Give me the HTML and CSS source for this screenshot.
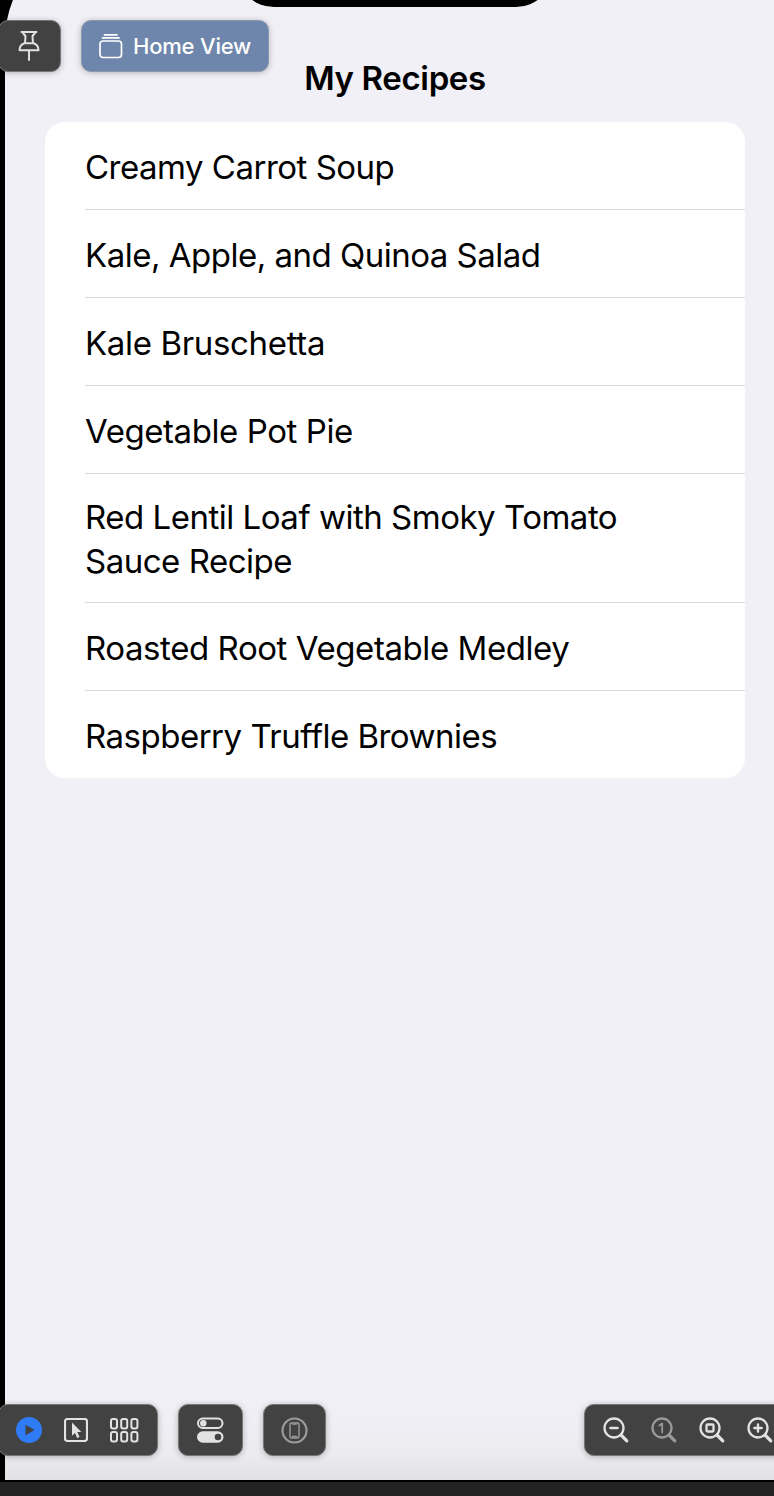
FILE: index.html
```html
<!DOCTYPE html>
<html lang="en">
<head>
<meta charset="utf-8">
<title>My Recipes</title>
<link rel="stylesheet" href="styles.css">
</head>
<body>
<div class="canvas">
  <div class="device">
    <div class="backdrop"></div>
    <div class="notch"></div>
    <main class="screen">
      <h1 class="title">My Recipes</h1>
      <ul class="recipes">
        <li class="snug">Creamy Carrot Soup</li>
        <li class="snug">Kale, Apple, and Quinoa Salad</li>
        <li class="loose">Kale Bruschetta</li>
        <li>Vegetable Pot Pie</li>
        <li class="tall">Red Lentil Loaf with Smoky Tomato<br>Sauce Recipe</li>
        <li>Roasted Root Vegetable Medley</li>
        <li class="snug">Raspberry Truffle Brownies</li>
      </ul>
    </main>
  </div>
  <footer class="statusbar"></footer>

  <div class="toolbar top">
    <button class="panel pin" aria-label="Pin">
      <svg width="24" height="32" viewBox="0 0 24 32"><path d="M4.500 2h15M6 2.500c0 2 2.500 2.200 2.500 4L8 13C4.700 14 2.500 17 2.500 20.200h19c0-3.200-2.200-6.200-5.500-7.200l-.5-6.500c0-1.800 2.500-2 2.500-4M8 13.200h8M12 20.500V30"/></svg>
    </button>
    <button class="panel home">
      <svg width="24" height="26" viewBox="0 0 24 26"><rect x="1" y="8" width="21.500" height="16.500" rx="3"/><path d="M3.500 4.900h16.500M5.500 1.800h12.500"/></svg>
      <span>Home View</span>
    </button>
  </div>

  <div class="toolbar bottom">
    <div class="panel modes">
      <svg width="26" height="26" viewBox="0 0 26 26"><circle class="blue" cx="13" cy="13" r="13"/><path class="play" d="M9.500 7.800v10.400L18.600 13z"/></svg>
      <svg width="24" height="24" viewBox="0 0 24 24"><rect x="1" y="1" width="22" height="22" rx="2.500"/><path class="fill" d="M8 4.500v13.200l3-2.800 2.200 5 2.300-1-2.200-4.900h4z"/></svg>
      <svg width="29" height="25" viewBox="0 0 29 25"><rect x="1" y="1" width="6" height="9.500" rx="2"/><rect x="11.200" y="1" width="6" height="9.500" rx="2"/><rect x="21.400" y="1" width="6" height="9.500" rx="2"/><rect x="1" y="14" width="6" height="9.500" rx="2"/><rect x="11.200" y="14" width="6" height="9.500" rx="2"/><rect x="21.400" y="14" width="6" height="9.500" rx="2"/></svg>
    </div>
    <button class="panel settings" aria-label="Device settings">
      <svg width="27" height="26" viewBox="0 0 27 26"><rect x="1" y="1.500" width="24.500" height="9.500" rx="4.750"/><circle class="fill" cx="6.300" cy="6.250" r="3.200"/><rect class="fill" x="0" y="14.200" width="26.500" height="11.500" rx="5.750"/><circle class="dark" cx="21" cy="20" r="3.300"/></svg>
    </button>
    <button class="panel phone" aria-label="Device">
      <svg width="27" height="27" viewBox="0 0 27 27"><circle cx="13.500" cy="13.500" r="12"/><rect class="thin" x="9" y="6" width="9" height="15" rx="1.500"/><path class="thin" d="M11.500 7h4M11.500 19.500h4"/></svg>
    </button>
    <div class="panel zoom">
      <svg width="27" height="27" viewBox="0 0 27 27"><circle cx="11" cy="11" r="9.500"/><path class="handle" d="M18 18l5.800 5.800"/><path d="M7.300 11h7.400"/></svg>
      <svg class="muted" width="27" height="27" viewBox="0 0 27 27"><circle cx="11" cy="11" r="9.500"/><path class="handle" d="M18 18l5.800 5.800"/><path class="one" d="M8.300 8.600l2.900-2v9"/></svg>
      <svg width="27" height="27" viewBox="0 0 27 27"><circle cx="11" cy="11" r="9.500"/><path class="handle" d="M18 18l5.800 5.800"/><rect x="7.500" y="7.500" width="7" height="7" rx="1"/></svg>
      <svg width="27" height="27" viewBox="0 0 27 27"><circle cx="11" cy="11" r="9.500"/><path class="handle" d="M18 18l5.800 5.800"/><path d="M7.300 11h7.400M11 7.300v7.400"/></svg>
    </div>
  </div>
</div>
</body>
</html>
```
FILE: styles.css
```css
* { box-sizing: border-box; }
body { margin: 0; font-family: Inter, sans-serif; color: #000; }
.canvas { position: relative; display: flex; flex-direction: column; width: 774px; height: 1496px; overflow: hidden; background: #000; }
.device { position: relative; height: 1482px; padding-left: 5px; padding-bottom: 2px; overflow: hidden; }
.backdrop { position: absolute; inset: -69px 0 2px 5px; border-top-left-radius: 110px; background: linear-gradient(to bottom, #f1f0f6 0, #f1f0f6 calc(100% - 80px), #ebebf0 calc(100% - 25px), #e2e2e5 100%); }
.notch { position: absolute; top: -67px; left: 237px; width: 316px; height: 74px; border-radius: 37px; background: #000; }
.screen { position: relative; padding: 56px 29px 0 40px; }
.title { margin: 0 0 22px; height: 44px; line-height: 44px; text-align: center; font-size: 33px; font-weight: 600; letter-spacing: -.35px; white-space: nowrap; }
.recipes { list-style: none; margin: 0; padding: 0 0 0 40px; border-radius: 20px; background: #fff; font-size: 33px; line-height: 44px; letter-spacing: -.43px; overflow: hidden; }
.recipes li { display: block; height: 88px; padding: 23px 0 0; border-bottom: 1px solid #dadadc; white-space: nowrap; }
.recipes li.tall { height: 129px; padding-top: 21px; letter-spacing: -.49px; }
.recipes li.snug { letter-spacing: -.5px; }
.recipes li.loose { letter-spacing: -.34px; }
.recipes li:last-child { height: 87px; border-bottom: 0; }
.statusbar { height: 14px; background: #232323; }

.toolbar { position: absolute; left: 0; display: flex; width: 774px; }
.toolbar.top { top: 20px; gap: 20px; }
.toolbar.bottom { top: 1404px; }
.panel { display: flex; flex: none; align-items: center; height: 52px; margin: 0; padding: 0; border: 1px solid #777; border-radius: 10px; background: #424242; box-shadow: 0 1px 6px rgba(0, 0, 0, .25); font-family: inherit; }
.panel svg { flex: none; fill: none; stroke: #e2e2e2; stroke-width: 2; stroke-linejoin: round; stroke-linecap: round; }
.pin { width: 63px; margin-left: -2px; padding-left: 18px; }
.home { width: 188px; padding-left: 17px; gap: 10px; border-color: #8c99ac; background: #6e86ac; color: #fff; font-size: 22px; font-weight: 500; letter-spacing: -.2px; white-space: nowrap; }
.home svg { stroke: #fff; stroke-width: 1.7; }
.modes { width: 160px; margin-left: -2px; padding-left: 17px; gap: 22px; }
.modes svg:nth-child(2) { stroke-width: 2.2; }
.settings { width: 65px; margin-left: 20px; padding-left: 18px; }
.phone { width: 63px; margin-left: 20px; justify-content: center; }
.phone svg { stroke: #9b9b9b; stroke-width: 2.2; }
.phone .thin { stroke-width: 1.4; }
.zoom { width: 220px; margin-left: 258px; padding-left: 17.500px; gap: 21px; }
.zoom svg { stroke-width: 2.3; }
.panel svg .fill { fill: #e2e2e2; stroke: none; }
.panel svg .dark { fill: #424242; stroke: none; }
.panel svg .blue { fill: #2f7bf6; stroke: none; }
.panel svg .play { fill: #424242; stroke: none; }
.panel svg .handle { stroke-width: 3.2; }
.panel svg .one { stroke-width: 1.8; }
.zoom svg.muted { stroke: #999; }
```
